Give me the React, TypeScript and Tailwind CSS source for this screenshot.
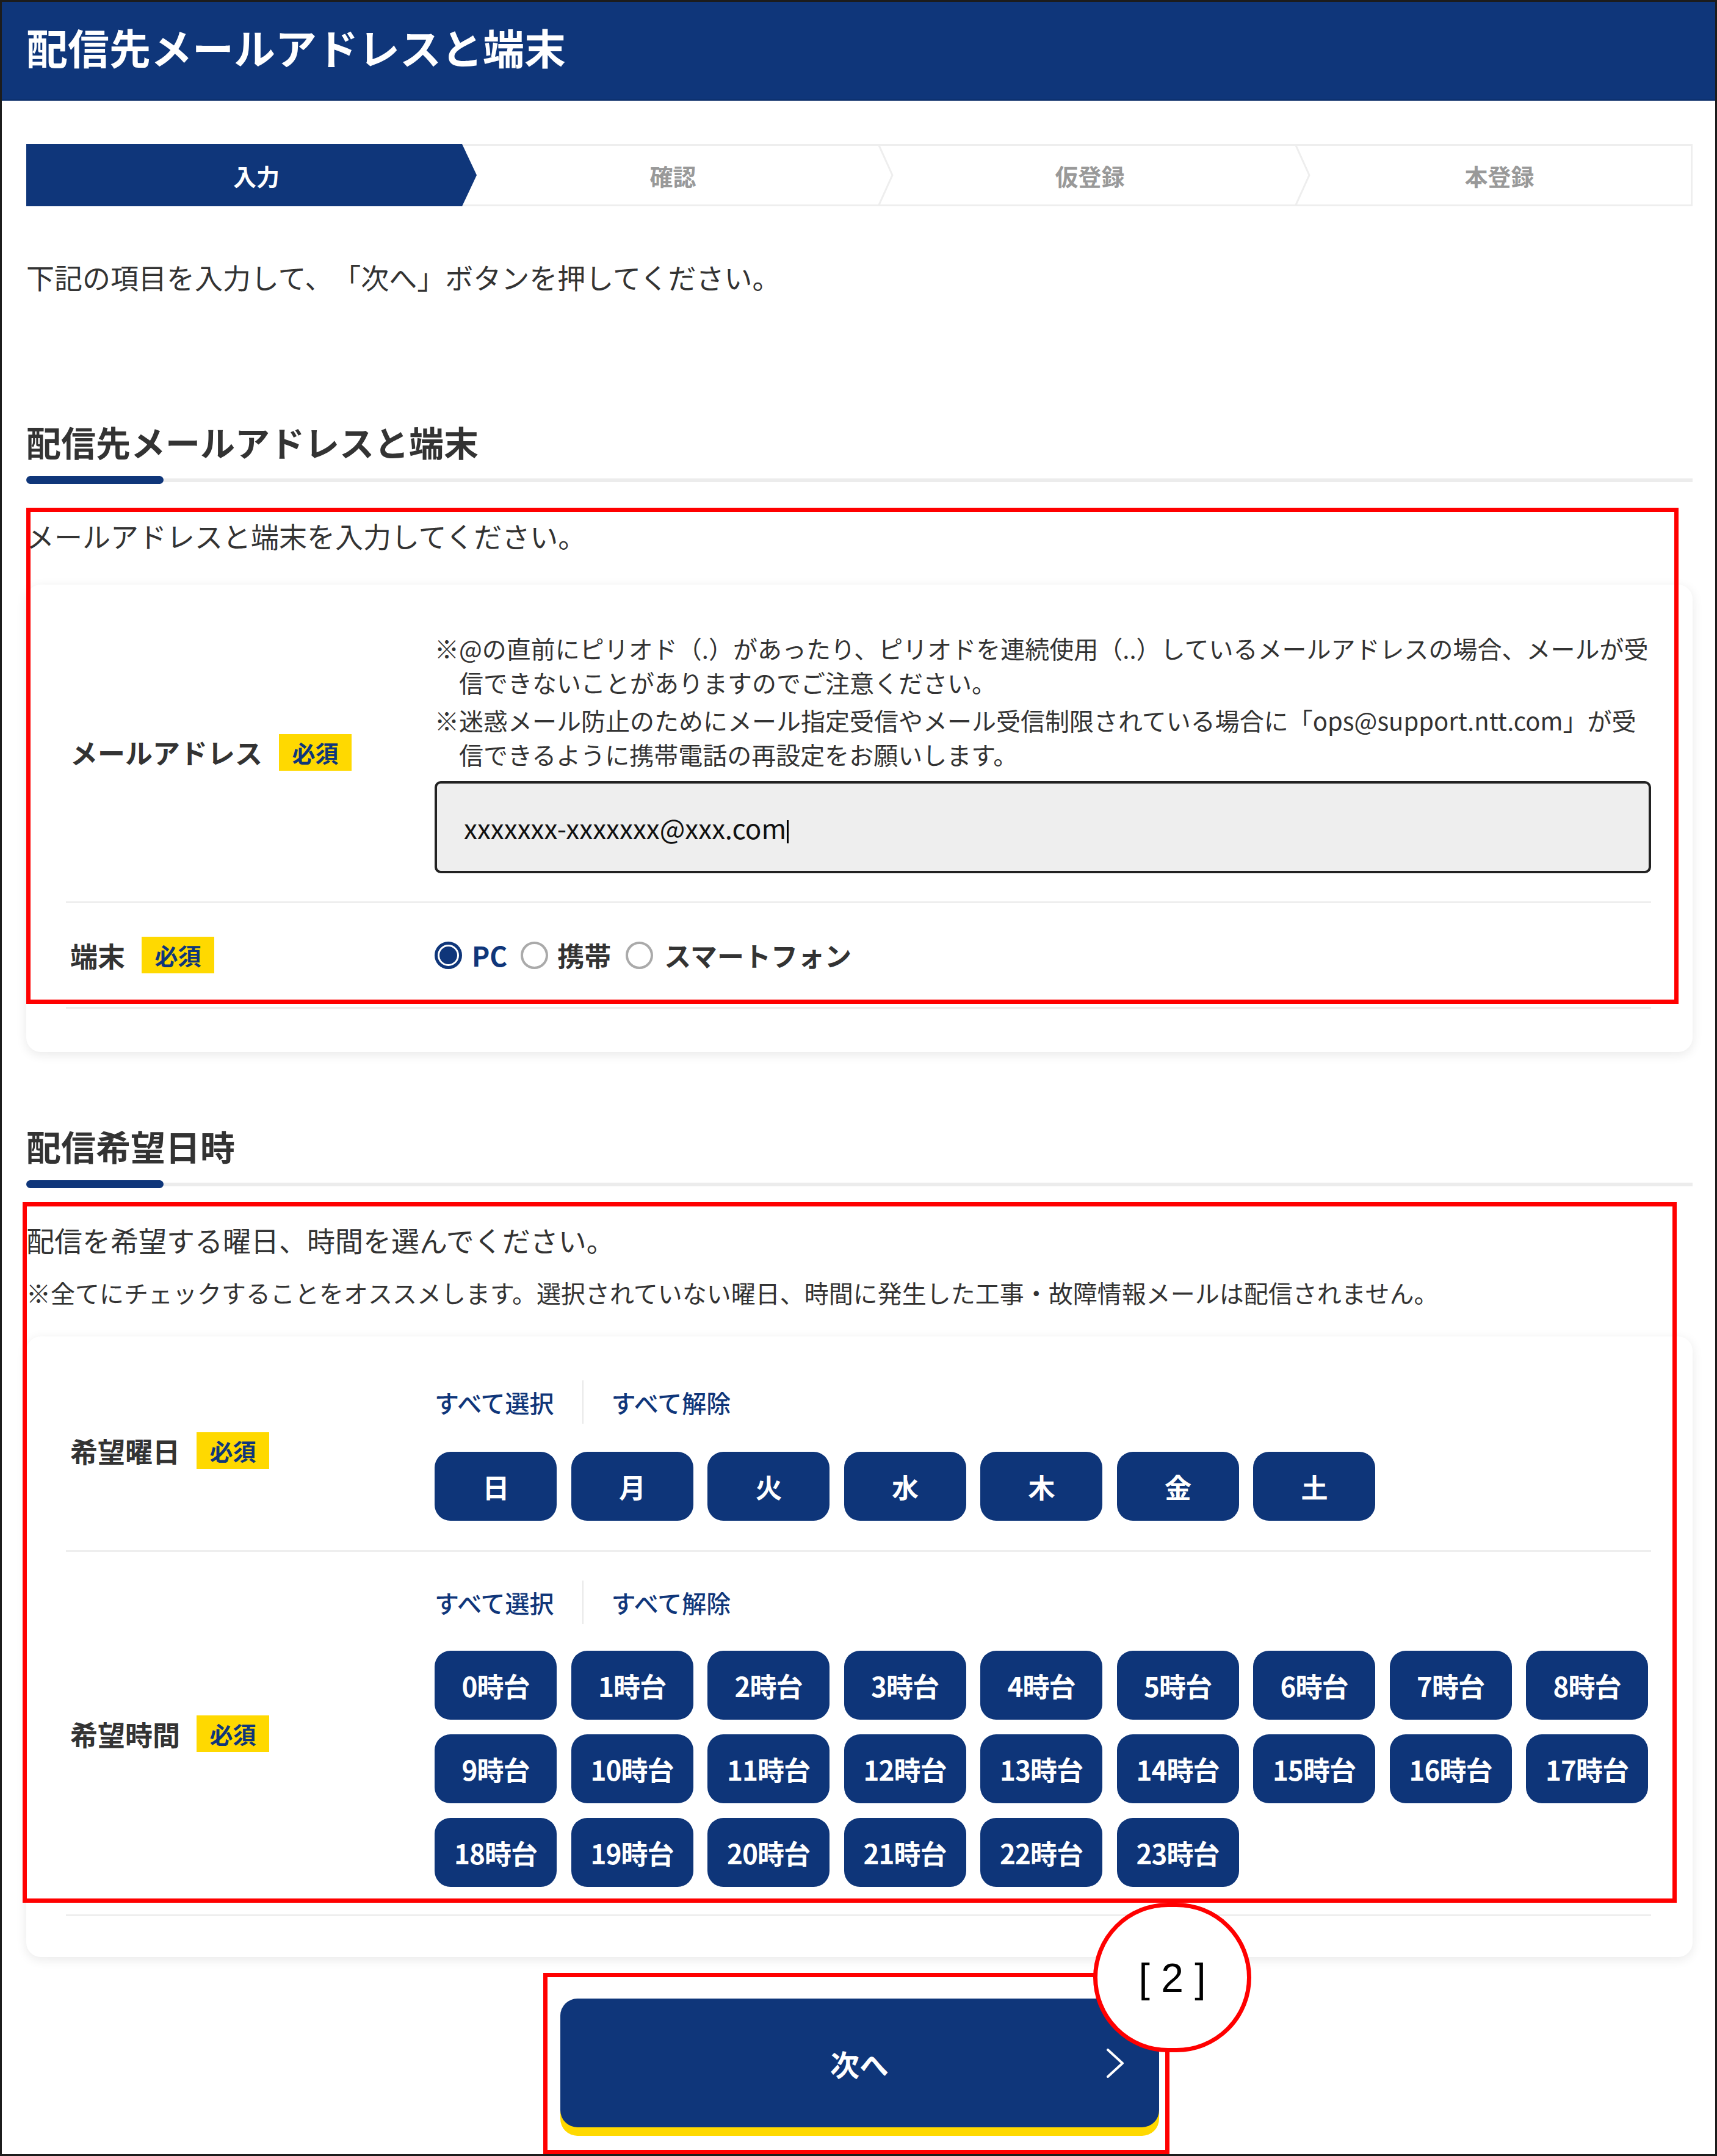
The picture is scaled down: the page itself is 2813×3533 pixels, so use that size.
import React from 'react';

const days = ['日', '月', '火', '水', '木', '金', '土'];
const hours = Array.from({ length: 24 }, (_, i) => `${i}時台`);

function Badge() {
  return (
    <span className="inline-flex items-center justify-center w-[119px] h-[60px] bg-[#ffd900] text-[#0f367a] text-[38px] font-bold leading-none">
      必須
    </span>
  );
}

function SectionTitle({ children }: { children: React.ReactNode }) {
  return (
    <>
      <h2 className="text-[57px] leading-[78px] font-bold text-[#333]">{children}</h2>
      <div className="mt-[18px] flex items-center">
        <div className="w-[225px] h-[13px] rounded-full bg-[#0f367a]" />
        <div className="flex-1 h-[6px] bg-[#ececec]" />
      </div>
    </>
  );
}

function Row({ label, className, children }: { label: string; className?: string; children: React.ReactNode }) {
  return (
    <div className={`flex items-center border-b-[3px] border-[#eeeeee] ${className ?? ''}`}>
      <div className="w-[604px] shrink-0 pl-[7px] flex items-center gap-[27px]">
        <span className="text-[45px] font-bold text-[#333] leading-none">{label}</span>
        <Badge />
      </div>
      <div className="flex-1">{children}</div>
    </div>
  );
}

function SelectLinks() {
  return (
    <div className="flex items-center h-[71px] text-[40px] font-medium text-[#0f367a]">
      <span className="pr-[46px] h-full flex items-center border-r-[2px] border-[#e8e8e8]">すべて選択</span>
      <span className="pl-[46px]">すべて解除</span>
    </div>
  );
}

function Pill({ children }: { children: React.ReactNode }) {
  return (
    <div className="w-[200px] h-[113px] rounded-[26px] bg-[#0e3579] text-white text-[44px] font-bold flex items-center justify-center tracking-[-1px]">
      {children}
    </div>
  );
}

function Steps() {
  return (
    <div className="flex h-[102px] text-[38px] font-bold">
      <div className="relative z-10 w-[714px] flex items-center justify-center text-white">
        <div className="absolute inset-y-0 left-0 right-[-24px] bg-[#0f367a] [clip-path:polygon(0_0,calc(100%_-_24px)_0,100%_50%,calc(100%_-_24px)_100%,0_100%)]" />
        <span className="relative pl-[40px]">入力</span>
      </div>
      {['確認', '仮登録', '本登録'].map((s, i) => (
        <div
          key={s}
          className={`relative flex items-center justify-center text-[#999] border-y-[3px] border-[#eeeeee] ${i === 2 ? 'flex-1 border-r-[3px]' : 'w-[683px]'}`}
        >
          <span className={i === 2 ? 'pl-[20px]' : 'pl-[8px]'}>{s}</span>
          {i < 2 && (
            <svg className="absolute right-[-24px] top-[-3px] w-[26px] h-[102px]" viewBox="0 0 26 102" fill="none">
              <polyline points="1,0 24,51 1,102" stroke="#eeeeee" strokeWidth="3" />
            </svg>
          )}
        </div>
      ))}
    </div>
  );
}

export default function App() {
  return (
    <div className="relative w-[2813px] h-[3533px] overflow-hidden bg-white [font-family:'Noto_Sans_CJK_JP','Noto_Sans',sans-serif] [text-spacing-trim:space-all] text-[#333]">
      <div className="h-full border-[3px] border-[#1c1c1c]">
        <header className="h-[162px] bg-[#0f367a] border-b-[2px] border-[#0a2c68] flex items-center pl-[40px] pb-[12px]">
          <h1 className="text-[68px] font-bold text-white leading-none">配信先メールアドレスと端末</h1>
        </header>

        <main className="pl-[40px] pr-[37px]">
          <div className="mt-[71px]">
            <Steps />
          </div>

          <p className="mt-[82px] text-[46px] leading-[66px]">下記の項目を入力して、「次へ」ボタンを押してください。</p>

          <section className="mt-[198px]">
            <SectionTitle>配信先メールアドレスと端末</SectionTitle>
            <p className="mt-[51px] text-[46px] leading-[66px]">メールアドレスと端末を入力してください。</p>

            <div className="mt-[48px] rounded-[24px] bg-white shadow-[0_4px_18px_rgba(0,0,0,0.09)] pt-[76px] pb-[71px] pl-[65px] pr-[68px]">
              <Row label="メールアドレス" className="pb-[46px]">
                <div className="text-[40px] leading-[56px] text-[#333] whitespace-nowrap">
                  <p className="pl-[1em] -indent-[1em]">
                    ※@の直前にピリオド（.）があったり、ピリオドを連続使用（..）しているメールアドレスの場合、メールが受
                    <br />
                    信できないことがありますのでご注意ください。
                  </p>
                  <p className="mt-[6px] pl-[1em] -indent-[1em]">
                    ※迷惑メール防止のためにメール指定受信やメール受信制限されている場合に「ops@support.ntt.com」が受
                    <br />
                    信できるように携帯電話の再設定をお願いします。
                  </p>
                </div>
                <div className="mt-[16px] h-[151px] rounded-[10px] border-[4px] border-[#222] bg-[#eeeeee] flex items-center pl-[44px] text-[44px] text-[#111]">
                  xxxxxxx-xxxxxxx@xxx.com
                  <span className="inline-block w-[3px] h-[38px] bg-black ml-[1px] mt-[14px]" />
                </div>
              </Row>

              <Row label="端末" className="py-[54px]">
                <div className="flex items-center h-[62px] text-[44px] font-bold">
                  <span className="w-[45px] h-[45px] rounded-full border-[5px] border-[#0f367a] p-[3px] mr-[16px]">
                    <span className="block w-full h-full rounded-full bg-[#0f367a]" />
                  </span>
                  <span className="text-[#0f367a] mr-[22px]">PC</span>
                  <span className="w-[45px] h-[45px] rounded-full border-[4px] border-[#aaaaaa] mr-[15px]" />
                  <span className="mr-[24px]">携帯</span>
                  <span className="w-[45px] h-[45px] rounded-full border-[4px] border-[#aaaaaa] mr-[18px]" />
                  <span>スマートフォン</span>
                </div>
              </Row>
            </div>
          </section>

          <section className="mt-[114px]">
            <SectionTitle>配信希望日時</SectionTitle>
            <p className="mt-[51px] text-[46px] leading-[66px]">配信を希望する曜日、時間を選んでください。</p>
            <p className="mt-[24px] text-[40px] leading-[60px] whitespace-nowrap">
              ※全てにチェックすることをオススメします。選択されていない曜日、時間に発生した工事・故障情報メールは配信されません。
            </p>

            <div className="mt-[42px] rounded-[24px] bg-white shadow-[0_4px_18px_rgba(0,0,0,0.09)] pt-[72px] pb-[67px] pl-[65px] pr-[68px]">
              <Row label="希望曜日" className="pb-[48px]">
                <SelectLinks />
                <div className="mt-[46px] flex gap-[23.5px]">
                  {days.map((d) => (
                    <Pill key={d}>{d}</Pill>
                  ))}
                </div>
              </Row>

              <Row label="希望時間" className="pt-[47px] pb-[45px]">
                <SelectLinks />
                <div className="mt-[44px] grid grid-cols-[repeat(9,200px)] gap-x-[23.5px] gap-y-[24px]">
                  {hours.map((h) => (
                    <Pill key={h}>{h}</Pill>
                  ))}
                </div>
              </Row>
            </div>
          </section>

          <div className="mt-[68px] flex justify-center">
            <button className="relative w-[981px] h-[211px] rounded-[28px] bg-[#0f367a] shadow-[0_14px_0_#ffd900] text-white text-[48px] font-bold flex items-center justify-center">
              次へ
              <svg className="absolute right-[56px] top-1/2 -translate-y-1/2" width="32" height="48" viewBox="0 0 32 48" fill="none">
                <polyline points="4,2 28,24 4,46" stroke="white" strokeWidth="4" strokeLinecap="round" strokeLinejoin="round" />
              </svg>
            </button>
          </div>
        </main>
      </div>

      {/* annotation overlays */}
      <div className="absolute left-[43px] top-[832px] w-[2707px] h-[813px] border-[7px] border-[#ff0000] pointer-events-none" />
      <div className="absolute left-[37px] top-[1970px] w-[2710px] h-[1148px] border-[7px] border-[#ff0000] pointer-events-none" />
      <div className="absolute left-[890px] top-[3233px] w-[1026px] h-[297px] border-[7px] border-[#ff0000] pointer-events-none" />
      <div className="absolute left-[1791px] top-[3118px] w-[259px] h-[245px] rounded-full border-[7px] border-[#ff0000] bg-white flex items-center justify-center">
        <span className="[font-family:'Liberation_Sans',Arial,sans-serif] text-[66px] text-black leading-none whitespace-pre">[ 2 ]</span>
      </div>
    </div>
  );
}
